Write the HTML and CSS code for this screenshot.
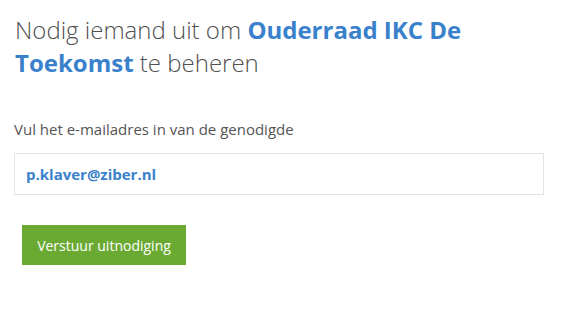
FILE: index.html
```html
<!DOCTYPE html>
<html lang="nl">
<head>
<meta charset="utf-8">
<title>Uitnodigen</title>
<link rel="stylesheet" href="styles.css">
</head>
<body>
<main class="invite">
  <h1 class="invite-title">Nodig iemand uit om <strong>Ouderraad IKC De Toekomst</strong> te beheren</h1>
  <form class="invite-form">
    <label class="field-label" for="email">Vul het e-mailadres in van de genodigde</label>
    <input class="field-input" id="email" type="email" value="p.klaver@ziber.nl">
    <div class="actions">
      <button class="btn-primary" type="button">Verstuur uitnodiging</button>
    </div>
  </form>
</main>
</body>
</html>
```

FILE: styles.css
```css
html, body {
  margin: 0;
  padding: 0;
  background: #ffffff;
}

body {
  font-family: "Open Sans", "Liberation Sans", sans-serif;
  color: #555555;
}

.invite {
  width: 530px;
  padding: 13px 0 0 14px;
}

.invite-title {
  margin: 0 0 0 1px;
  font-size: 24px;
  line-height: 33px;
  font-weight: 300;
  color: #505050;
}

.invite-title strong {
  font-weight: 700;
  color: #3a81cc;
}

.invite-form {
  display: flex;
  flex-direction: column;
  margin-top: 40px;
}

.field-label {
  font-size: 15px;
  line-height: 20px;
  color: #555555;
}

.field-input {
  box-sizing: border-box;
  margin-top: 14px;
  width: 530px;
  height: 42px;
  padding: 0 11px;
  border: 1px solid #e3e3e3;
  border-radius: 0;
  font-family: inherit;
  font-size: 15px;
  font-weight: 700;
  color: #3a81cc;
  outline: none;
}

.actions {
  display: flex;
  padding: 30px 0 0 8px;
}

.btn-primary {
  box-sizing: border-box;
  width: 164px;
  height: 40px;
  border: 0;
  border-radius: 0;
  background: #6aaa33;
  color: #ffffff;
  font-family: inherit;
  font-size: 14px;
  font-weight: 400;
  cursor: pointer;
}
```
